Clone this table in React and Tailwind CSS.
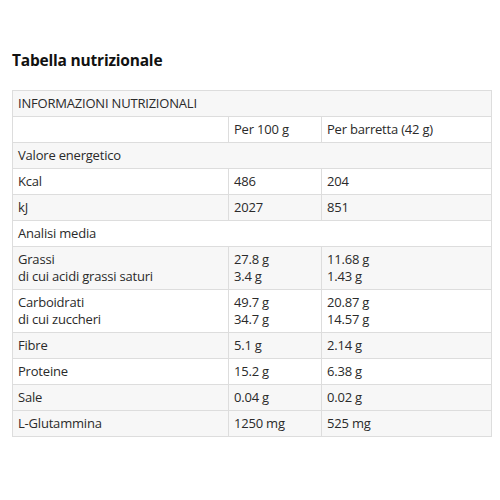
const rows = [
  { type: 'head', label: 'INFORMAZIONI NUTRIZIONALI', bg: 'bg-[#f7f7f7]' },
  { label: '', a: 'Per 100 g', b: 'Per barretta (42 g)', bg: 'bg-white' },
  { type: 'section', label: 'Valore energetico', bg: 'bg-[#f7f7f7]' },
  { label: 'Kcal', a: '486', b: '204', bg: 'bg-white' },
  { label: 'kJ', a: '2027', b: '851', bg: 'bg-[#f7f7f7]' },
  { type: 'section', label: 'Analisi media', bg: 'bg-white' },
  { label: ['Grassi', 'di cui acidi grassi saturi'], a: ['27.8 g', '3.4 g'], b: ['11.68 g', '1.43 g'], bg: 'bg-[#f7f7f7]' },
  { label: ['Carboidrati', 'di cui zuccheri'], a: ['49.7 g', '34.7 g'], b: ['20.87 g', '14.57 g'], bg: 'bg-white' },
  { label: 'Fibre', a: '5.1 g', b: '2.14 g', bg: 'bg-[#f7f7f7]' },
  { label: 'Proteine', a: '15.2 g', b: '6.38 g', bg: 'bg-white' },
  { label: 'Sale', a: '0.04 g', b: '0.02 g', bg: 'bg-[#f7f7f7]' },
  { label: 'L-Glutammina', a: '1250 mg', b: '525 mg', bg: 'bg-[#f7f7f7]' },
]

function Lines({ value }) {
  const list = Array.isArray(value) ? value : [value]
  return list.map((t, i) => <div key={i}>{t}</div>)
}

export default function App() {
  return (
    <div className="min-h-[500px] w-[500px] bg-white px-3 pt-[50px] text-[#2a2a2a] [font-family:'Open_Sans',sans-serif]">
      <h2 className="text-[15.5px] font-bold leading-[20px] tracking-[-0.2px] text-[#111]">Tabella nutrizionale</h2>
      <table className="mt-[20px] w-[480px] border-collapse text-[13px] leading-[17px] tracking-[-0.2px]">
        <tbody>
          {rows.map((r, i) => {
            if (r.type) {
              return (
                <tr key={i} className={r.bg}>
                  <td colSpan={3} className="h-[26px] border border-[#ddd] px-[5px] py-[4px]">
                    {r.label}
                  </td>
                </tr>
              )
            }
            return (
              <tr key={i} className={r.bg}>
                <td className="w-[216px] border border-[#ddd] px-[5px] py-[4px] align-top">
                  <Lines value={r.label} />
                </td>
                <td className="w-[93px] border border-[#ddd] px-[5px] py-[4px] align-top">
                  <Lines value={r.a} />
                </td>
                <td className="border border-[#ddd] px-[5px] py-[4px] align-top">
                  <Lines value={r.b} />
                </td>
              </tr>
            )
          })}
        </tbody>
      </table>
    </div>
  )
}
